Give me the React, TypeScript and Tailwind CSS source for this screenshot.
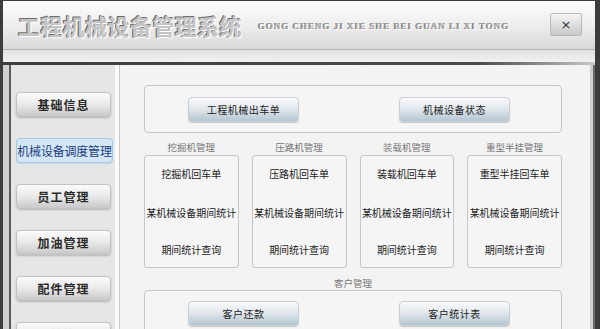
import React from "react";

const cjk = "font-['Noto_Sans_CJK_SC',sans-serif]";

function NavButton({ label, active }: { label: string; active?: boolean }) {
  if (active) {
    return (
      <div className="flex h-[25px] w-[97px] shrink-0 items-center justify-center whitespace-nowrap rounded-[4px] border border-[#a9c9e6] bg-[#d3e6f8] text-[12px] leading-none tracking-[-0.2px] text-[#1c3f7c] shadow-[0_1px_1px_#c4d6e6]">
        {label}
      </div>
    );
  }
  return (
    <div className="flex h-[25px] w-[95px] shrink-0 items-center justify-center rounded-[4px] border border-[#c2c2c2] bg-gradient-to-b from-[#fbfbfb] via-[#e9e9e9] to-[#c9c9c9] text-[12px] font-bold leading-none tracking-[1px] text-[#2a2a2a] shadow-[0_1px_2px_#b5b5b5]">
      {label}
    </div>
  );
}

function BlueButton({ label }: { label: string }) {
  return (
    <div className="flex h-[25px] w-[111px] shrink-0 items-center justify-center rounded-[4px] border border-[#c8d0d6] bg-gradient-to-b from-[#fafbfc] via-[#dfe6eb] to-[#b5c6d2] text-[10px] leading-none tracking-[0.5px] text-[#222] shadow-[0_1px_1px_#c7c7c7]">
      {label}
    </div>
  );
}

function GroupCol({ title, first }: { title: string; first: string }) {
  return (
    <div className="flex flex-col">
      <div className="mb-[2px] h-[12px] text-center text-[9.5px] leading-[12px] text-[#777]">{title}</div>
      <div className="flex h-[113px] flex-col items-center rounded-[3px] border border-[#c6c6c6] bg-[#f5f5f5] pt-[12px] text-[10px] leading-[12px] text-[#1e1e1e]">
        <div>{first}</div>
        <div className="mt-[27px]">某机械设备期间统计</div>
        <div className="mt-[25px]">期间统计查询</div>
      </div>
    </div>
  );
}

export default function App() {
  return (
    <div className={`h-[329px] w-[600px] overflow-hidden bg-[#3c3c3c] pl-[3px] pr-[5px] pt-[1px] ${cjk}`}>
      {/* header */}
      <div className="flex h-[49px] items-center border-b border-[#b3b3b3] bg-gradient-to-b from-[#fdfdfd] via-[#eeeeee] to-[#d9d9d9] pl-[15px] pr-[10px]">
        <div className="text-[22px] font-bold leading-none tracking-[0.4px] text-[#c4c4c4] [text-shadow:1px_1px_0_#ffffff,-1px_-1px_0_#6e6e6e,-1px_0_0_#8a8a8a]">
          工程机械设备管理系统
        </div>
        <div className="ml-[16px] mt-[3px] font-['Liberation_Serif',serif] text-[9px] font-bold tracking-[1px] text-[#a8a8a8] [text-shadow:1px_1px_0_#ffffff,-0.5px_-0.5px_0_#555]">
          GONG CHENG JI XIE SHE BEI GUAN LI XI TONG
        </div>
        <div className="ml-auto mr-[3px] mt-[-2px] flex h-[23px] w-[32px] items-center justify-center rounded-[2px] border border-[#b9b9b9] bg-gradient-to-b from-[#f6f6f6] to-[#c8c8c8] font-['DejaVu_Sans',sans-serif] text-[13px] leading-none text-[#333]">
          ×
        </div>
      </div>
      <div className="h-[12px] bg-gradient-to-b from-[#e2e2e2] to-[#f1f1f1]" />
      <div className="h-[3px] bg-gradient-to-r from-[#3e3e3e] via-[#4a4a4a] via-80% to-[#c9c9c9]" />

      {/* body */}
      <div className="flex h-[264px] bg-[#d4d4d4]">
        <div className="w-[6px] bg-[#d0d0d0]" />
        <div className="w-[2px] bg-[#5a5a5a]" />
        <div className="flex w-[104px] flex-col gap-[21px] bg-[#e6e6e6] pl-[5px] pt-[27px]">
          <NavButton label="基础信息" />
          <NavButton label="机械设备调度管理" active />
          <NavButton label="员工管理" />
          <NavButton label="加油管理" />
          <NavButton label="配件管理" />
          <NavButton label="系统管理" />
        </div>
        <div className="w-[4px] bg-[#fafafa]" />
        <div className="w-[1px] bg-[#c9c9c9]" />
        <div className="flex-1 bg-[#f3f3f3] pl-[24px] pr-[24px] pt-[20px]">
          <div className="flex h-[48px] w-[418px] gap-[100px] rounded-[4px] border border-[#c6c6c6] bg-[#f5f5f5] pl-[43px] pt-[11px]">
            <BlueButton label="工程机械出车单" />
            <BlueButton label="机械设备状态" />
          </div>
          <div className="mt-[8px] grid w-[418px] grid-cols-4 gap-[13px]">
            <GroupCol title="挖掘机管理" first="挖掘机回车单" />
            <GroupCol title="压路机管理" first="压路机回车单" />
            <GroupCol title="装载机管理" first="装载机回车单" />
            <GroupCol title="重型半挂管理" first="重型半挂回车单" />
          </div>
          <div className="mt-[9px] h-[12px] w-[418px] text-center text-[9.5px] leading-[12px] text-[#777]">客户管理</div>
          <div className="mt-[1px] flex h-[60px] w-[418px] gap-[100px] rounded-[4px] border border-[#c6c6c6] bg-[#f5f5f5] pl-[43px] pt-[10px]">
            <BlueButton label="客户还款" />
            <BlueButton label="客户统计表" />
          </div>
        </div>
        <div className="w-[3px] bg-[#cfcfcf]" />
        <div className="w-[2px] bg-[#6a6a6a]" />
      </div>
    </div>
  );
}
